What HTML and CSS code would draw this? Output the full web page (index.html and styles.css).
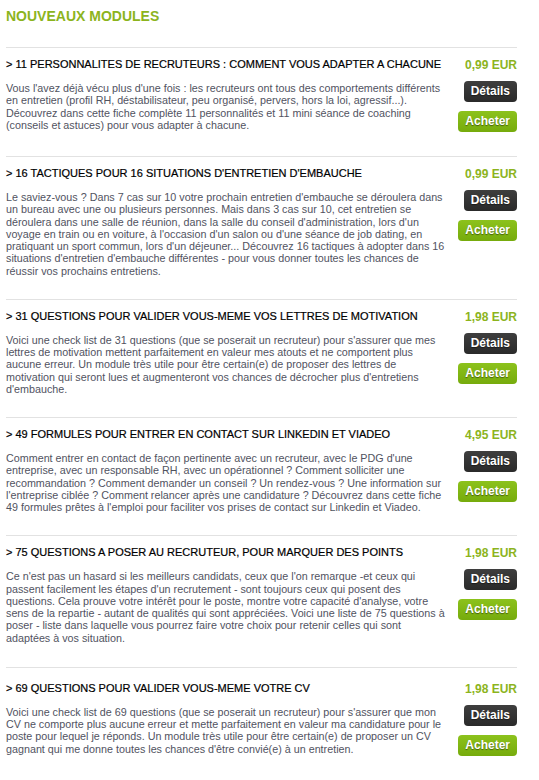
FILE: index.html
```html
<!DOCTYPE html>
<html lang="fr">
<head>
<meta charset="utf-8">
<title>Nouveaux modules</title>
<link rel="stylesheet" href="styles.css">
</head>
<body>
<div class="page">
  <h1 class="heading">NOUVEAUX MODULES</h1>
  <div class="list">
    <div class="item">
      <div class="title">&gt; 11 PERSONNALITES DE RECRUTEURS : COMMENT VOUS ADAPTER A CHACUNE</div>
      <div class="price">0,99 EUR</div>
      <p class="desc">Vous l'avez déjà vécu plus d'une fois : les recruteurs ont tous des comportements différents en entretien (profil RH, déstabilisateur, peu organisé, pervers, hors la loi, agressif...). Découvrez dans cette fiche complète 11 personnalités et 11 mini séance de coaching (conseils et astuces) pour vous adapter à chacune.</p>
      <div class="actions"><a class="btn btn-dark">Détails</a><a class="btn btn-green">Acheter</a></div>
    </div>
    <div class="item">
      <div class="title">&gt; 16 TACTIQUES POUR 16 SITUATIONS D'ENTRETIEN D'EMBAUCHE</div>
      <div class="price">0,99 EUR</div>
      <p class="desc">Le saviez-vous ? Dans 7 cas sur 10 votre prochain entretien d'embauche se déroulera dans un bureau avec une ou plusieurs personnes. Mais dans 3 cas sur 10, cet entretien se déroulera dans une salle de réunion, dans la salle du conseil d'administration, lors d'un voyage en train ou en voiture, à l'occasion d'un salon ou d'une séance de job dating, en pratiquant un sport commun, lors d'un déjeuner... Découvrez 16 tactiques à adopter dans 16 situations d'entretien d'embauche différentes - pour vous donner toutes les chances de réussir vos prochains entretiens.</p>
      <div class="actions"><a class="btn btn-dark">Détails</a><a class="btn btn-green">Acheter</a></div>
    </div>
    <div class="item">
      <div class="title">&gt; 31 QUESTIONS POUR VALIDER VOUS-MEME VOS LETTRES DE MOTIVATION</div>
      <div class="price">1,98 EUR</div>
      <p class="desc">Voici une check list de 31 questions (que se poserait un recruteur) pour s'assurer que mes lettres de motivation mettent parfaitement en valeur mes atouts et ne comportent plus aucune erreur. Un module très utile pour être certain(e) de proposer des lettres de motivation qui seront lues et augmenteront vos chances de décrocher plus d'entretiens d'embauche.</p>
      <div class="actions"><a class="btn btn-dark">Détails</a><a class="btn btn-green">Acheter</a></div>
    </div>
    <div class="item">
      <div class="title">&gt; 49 FORMULES POUR ENTRER EN CONTACT SUR LINKEDIN ET VIADEO</div>
      <div class="price">4,95 EUR</div>
      <p class="desc">Comment entrer en contact de façon pertinente avec un recruteur, avec le PDG d'une entreprise, avec un responsable RH, avec un opérationnel ? Comment solliciter une recommandation ? Comment demander un conseil ? Un rendez-vous ? Une information sur l'entreprise ciblée ? Comment relancer après une candidature ? Découvrez dans cette fiche 49 formules prêtes à l'emploi pour faciliter vos prises de contact sur Linkedin et Viadeo.</p>
      <div class="actions"><a class="btn btn-dark">Détails</a><a class="btn btn-green">Acheter</a></div>
    </div>
    <div class="item item-tall">
      <div class="title">&gt; 75 QUESTIONS A POSER AU RECRUTEUR, POUR MARQUER DES POINTS</div>
      <div class="price">1,98 EUR</div>
      <p class="desc">Ce n'est pas un hasard si les meilleurs candidats, ceux que l'on remarque -et ceux qui passent facilement les étapes d'un recrutement - sont toujours ceux qui posent des questions. Cela prouve votre intérêt pour le poste, montre votre capacité d'analyse, votre sens de la repartie - autant de qualités qui sont appréciées. Voici une liste de 75 questions à poser - liste dans laquelle vous pourrez faire votre choix pour retenir celles qui sont adaptées à vos situation.</p>
      <div class="actions"><a class="btn btn-dark">Détails</a><a class="btn btn-green">Acheter</a></div>
    </div>
    <div class="item item-last">
      <div class="title">&gt; 69 QUESTIONS POUR VALIDER VOUS-MEME VOTRE CV</div>
      <div class="price">1,98 EUR</div>
      <p class="desc">Voici une check list de 69 questions (que se poserait un recruteur) pour s'assurer que mon CV ne comporte plus aucune erreur et mette parfaitement en valeur ma candidature pour le poste pour lequel je réponds. Un module très utile pour être certain(e) de proposer un CV gagnant qui me donne toutes les chances d'être convié(e) à un entretien.</p>
      <div class="actions"><a class="btn btn-dark">Détails</a><a class="btn btn-green">Acheter</a></div>
    </div>
  </div>
</div>
</body>
</html>
```

FILE: styles.css
```css
html, body {
  margin: 0;
  padding: 0;
  background: #ffffff;
}
body {
  font-family: "Liberation Sans", Arial, sans-serif;
  color: #222;
}
.page {
  width: 511px;
  padding: 8px 0 0 6px;
}
.heading {
  margin: 0;
  font-size: 14px;
  font-weight: bold;
  color: #8cb41d;
  line-height: 16px;
}
.list {
  margin-top: 23px;
}
.item {
  display: grid;
  grid-template-columns: 442px 1fr;
  border-top: 1px solid #e2e2e2;
  padding: 8px 0 0;
}
.title {
  font-size: 11px;
  line-height: 14px;
  color: #000;
  padding-top: 1px;
  -webkit-text-stroke: 0.2px #000;
  white-space: nowrap;
}
.price {
  font-size: 12px;
  font-weight: bold;
  color: #8cb41d;
  text-align: right;
  line-height: 16px;
  padding-top: 1px;
}
.desc {
  margin: 9px 0 22px;
  font-size: 10.75px;
  line-height: 12.25px;
  color: #51535f;
}
.actions {
  display: flex;
  flex-direction: column;
  align-items: flex-end;
  gap: 9px;
  padding: 8px 0 24px;
}
.btn {
  display: block;
  font-size: 12px;
  font-weight: bold;
  color: #fff;
  text-shadow: 0 1px 1px rgba(0,0,0,0.45);
  border-radius: 4px;
  height: 21px;
  line-height: 21px;
  padding: 0 7px;
}
.btn-dark {
  background: linear-gradient(#3e3e3e, #2a2a2a);
}
.btn-green {
  background: linear-gradient(#8cc21c, #76ab0c);
}
.item-tall .desc {
  margin-bottom: 23px;
}
.item-last {
  padding-top: 12px;
}
```
